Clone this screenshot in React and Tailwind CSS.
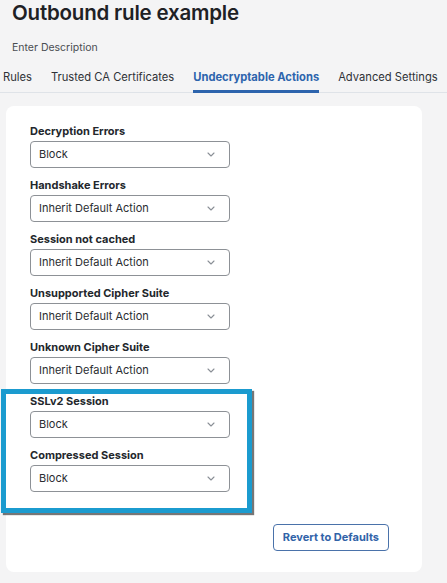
import React from "react";

const rows = [
  { label: "Decryption Errors", value: "Block" },
  { label: "Handshake Errors", value: "Inherit Default Action" },
  { label: "Session not cached", value: "Inherit Default Action" },
  { label: "Unsupported Cipher Suite", value: "Inherit Default Action" },
  { label: "Unknown Cipher Suite", value: "Inherit Default Action" },
  { label: "SSLv2 Session", value: "Block" },
  { label: "Compressed Session", value: "Block" },
];

const tabs = [
  "Rules",
  "Trusted CA Certificates",
  "Undecryptable Actions",
  "Advanced Settings",
];

const Chevron = () => (
  <svg width="8" height="5" viewBox="0 0 8 5" fill="none">
    <path d="M1 1l3 3 3-3" stroke="#8a8f96" strokeWidth="1.1" strokeLinecap="round" strokeLinejoin="round" />
  </svg>
);

const SelectRow = ({ label, value }) => (
  <div className="flex flex-col">
    <div className="text-[11px] leading-[14px] font-bold text-[#23272c]">{label}</div>
    <div className="mt-[3px] w-[200px] h-[27px] border border-[#8d9196] rounded-[4px] bg-white flex items-center justify-between pl-[8px] pr-[14px]">
      <span className="text-[11px] text-[#2a2d31]">{value}</span>
      <Chevron />
    </div>
  </div>
);

export default function App() {
  return (
    <div
      className="w-[447px] h-[583px] bg-[#f4f4f5] overflow-hidden relative"
      style={{ fontFamily: "Inter, 'Noto Sans', sans-serif" }}
    >
      <div className="pl-[12px] pt-[1px]">
        <h1 className="text-[20.5px] leading-[24px] font-semibold text-[#1e2125] tracking-[-0.2px]">
          Outbound rule example
        </h1>
        <div className="mt-[15px] text-[10.5px] text-[#4a4d52]">Enter Description</div>
      </div>
      <div className="mt-[10px] flex border-b border-[#dfe3e8] h-[27px] pl-[3px] gap-[19px] whitespace-nowrap">
        {tabs.map((t) => (
          <div
            key={t}
            className={
              "text-[11.2px] leading-[22px] h-[27px] " +
              (t === "Undecryptable Actions"
                ? "font-bold text-[#2d64ad] border-b-[3px] border-[#2d64ad]"
                : "text-[#2f3237]")
            }
          >
            {t}
          </div>
        ))}
      </div>
      <div className="ml-[6px] mt-[13px] w-[416px] h-[466px] bg-white rounded-[8px] pt-[18px] pl-[24px] flex flex-col">
        <div className="flex flex-col gap-[10px]">
          {rows.map((r) => (
            <SelectRow key={r.label} {...r} />
          ))}
        </div>
        <div className="flex justify-end pr-[33px] mt-[32px]">
          <button className="h-[27px] px-[9px] border border-[#4a72aa] rounded-[4px] text-[11px] font-bold text-[#3163a8] bg-white">
            Revert to Defaults
          </button>
        </div>
      </div>
      <div className="absolute left-[1px] top-[389px] w-[251px] h-[124px] border-[5px] border-[#1b9bcf] shadow-[2px_2px_1px_rgba(60,60,60,0.7)]" />
    </div>
  );
}
